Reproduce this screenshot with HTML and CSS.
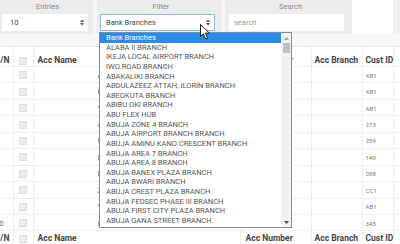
FILE: index.html
```html
<!DOCTYPE html>
<html lang="en">
<head>
    <meta charset="UTF-8">
    <title>Accounts</title>
    <link rel="stylesheet" href="styles.css">
</head>
<body>
<div class="page">
    <div class="toolbar">
        <div class="tool tool-entries">
            <div class="tool-label">Entries</div>
            <div class="select">
                <span>10</span>
                <svg class="arrows" width="4" height="7" viewBox="0 0 4 7"><path d="M0 3 L2 0.5 L4 3 Z M0 4 L2 6.5 L4 4 Z"/></svg>
            </div>
        </div>
        <div class="tool tool-filter">
            <div class="tool-label">Filter</div>
            <div class="select select-open">
                <span>Bank Branches</span>
                <svg class="arrows" width="4" height="7" viewBox="0 0 4 7"><path d="M0 3 L2 0.5 L4 3 Z M0 4 L2 6.5 L4 4 Z"/></svg>
            </div>
        </div>
        <div class="tool tool-search">
            <div class="tool-label">Search</div>
            <input class="search-input" type="text" placeholder="search">
        </div>
        <div class="tool-space"></div>
        <div class="tool-edge"></div>
    </div>
    <div class="strip"></div>

    <div class="table-wrap">
        <table class="accounts">
            <colgroup>
                <col class="col-sn"><col class="col-check"><col class="col-name">
                <col class="col-number"><col class="col-branch"><col class="col-cust"><col class="col-extra">
            </colgroup>
            <thead>
            <tr>
                <th>S/N</th><th><span class="check"></span></th><th>Acc Name</th>
                <th>Acc Number</th><th>Acc Branch</th><th>Cust ID</th><th></th>
            </tr>
            </thead>
            <tbody id="rows"></tbody>
            <tfoot>
            <tr>
                <th>S/N</th><th><span class="check"></span></th><th>Acc Name</th>
                <th>Acc Number</th><th>Acc Branch</th><th>Cust ID</th><th></th>
            </tr>
            </tfoot>
        </table>
    </div>

    <div class="dropdown">
        <ul class="options" id="options"></ul>
        <div class="scrollbar">
            <div class="scroll-btn"><svg width="5" height="3" viewBox="0 0 5 3"><path d="M0 3 L2.5 0 L5 3 Z"/></svg></div>
            <div class="scroll-track"><div class="scroll-thumb"></div></div>
            <div class="scroll-btn"><svg width="5" height="3" viewBox="0 0 5 3"><path d="M0 0 L2.5 3 L5 0 Z"/></svg></div>
        </div>
    </div>

    <svg class="cursor" width="11" height="16" viewBox="0 0 11 16">
        <path d="M0.5 0.5 L0.5 12.5 L3.3 9.8 L5.6 15 L7.6 14.1 L5.4 9.1 L9.3 9.1 Z" fill="#fff" stroke="#222" stroke-width="1"/>
    </svg>
</div>

<script>
    const rows = [
        { sn: 1, name: 'ADEYEMI TOLU', number: '0012345', cust: 'AB1' },
        { sn: 2, name: 'FOLAKE ADE', number: '0023456', cust: 'AB1' },
        { sn: 3, name: 'YUSUF BELLO', number: '0034567', cust: 'AB1' },
        { sn: 4, name: 'ABIOLA OKE', number: '0045678', cust: '273' },
        { sn: 5, name: 'IBRAHIM SANI', number: '20123456715', cust: '259' },
        { sn: 6, name: 'IFEOMA NWOSU', number: '0067890', cust: '140' },
        { sn: 7, name: 'LATEEF ADE', number: '0078901', cust: '098' },
        { sn: 8, name: 'ZAINAB MUSA', number: '0089012', cust: 'CC1' },
        { sn: 9, name: 'YEMISI OJO', number: '0090123', cust: 'AB1' },
        { sn: 10, name: 'IKENNA EZE', number: '0101234', cust: '345' }
    ];

    const branches = [
        'Bank Branches', 'ALABA II BRANCH', 'IKEJA LOCAL AIRPORT BRANCH', 'IWO ROAD BRANCH',
        'ABAKALIKI BRANCH', 'ABDULAZEEZ ATTAH, ILORIN BRANCH', 'ABEOKUTA BRANCH', 'ABIBU OKI BRANCH',
        'ABU FLEX HUB', 'ABUJA ZONE 4 BRANCH', 'ABUJA AIRPORT BRANCH BRANCH', 'ABUJA AMINU KANO CRESCENT BRANCH',
        'ABUJA AREA 7 BRANCH', 'ABUJA AREA 8 BRANCH', 'ABUJA BANEX PLAZA BRANCH', 'ABUJA BWARI BRANCH',
        'ABUJA CREST PLAZA BRANCH', 'ABUJA FEDSEC PHASE III BRANCH', 'ABUJA FIRST CITY PLAZA BRANCH',
        'ABUJA GANA STREET BRANCH'
    ];

    const tbody = document.getElementById('rows');
    rows.forEach(row => {
        const tr = document.createElement('tr');
        tr.innerHTML = `
            <td>${row.sn}</td>
            <td><span class="check"></span></td>
            <td class="cell-name">${row.name}</td>
            <td>${row.number}</td>
            <td></td>
            <td><span class="cust">${row.cust}0042</span></td>
            <td></td>
        `;
        tbody.appendChild(tr);
    });

    const list = document.getElementById('options');
    branches.forEach((branch, i) => {
        const li = document.createElement('li');
        li.textContent = branch;
        if (i === 0) li.className = 'active';
        list.appendChild(li);
    });
</script>
</body>
</html>
```

FILE: styles.css
```css
body {
    margin: 0;
    font-family: Roboto, "Liberation Sans", sans-serif;
    background-color: #ffffff;
}

.page {
    position: relative;
    width: 400px;
    height: 244px;
    overflow: hidden;
}

/* barre d'outils */
.toolbar {
    display: flex;
    height: 34px;
    background-color: #f6f6f6;
}

.tool {
    display: flex;
    flex-direction: column;
    box-sizing: border-box;
    background-color: #ececec;
}

.tool-entries {
    width: 93px;
    padding-left: 2px;
    margin-right: 4px;
}

.tool-filter {
    width: 125px;
    padding-left: 3px;
    margin-right: 3px;
}

.tool-search {
    width: 127px;
    padding-left: 4px;
}

.tool-space {
    flex: 1;
    background-color: #ffffff;
}

.tool-edge {
    width: 7px;
    background-color: #efefef;
}

.tool-label {
    height: 14px;
    line-height: 14px;
    font-size: 7.5px;
    color: #8a8a8a;
    text-align: center;
}

.select {
    display: flex;
    align-items: center;
    justify-content: space-between;
    box-sizing: border-box;
    width: 86px;
    height: 17px;
    padding: 0 4px 0 8px;
    background-color: #ffffff;
    font-size: 7.5px;
    color: #444;
}

.select-open {
    width: 115px;
    padding: 0 4px 0 5px;
    border: 1px solid #8cb9e8;
}

.arrows {
    fill: #555;
}

.search-input {
    box-sizing: border-box;
    width: 115px;
    height: 17px;
    margin: 0;
    padding: 0 5px;
    border: none;
    outline: none;
    background-color: #ffffff;
    font-family: inherit;
    font-size: 7.5px;
    color: #444;
}

.search-input::placeholder {
    color: #9a9a9a;
}

.strip {
    height: 12px;
    background-color: #f7f7f7;
    border-bottom: 1px solid #e8e8e8;
}

/* tableau */
.table-wrap {
    overflow: hidden;
}

.accounts {
    margin-left: -14px;
    width: 437px;
    table-layout: fixed;
    border-collapse: collapse;
    font-size: 7.5px;
    color: #666;
}

.col-sn { width: 27px; }
.col-check { width: 20px; }
.col-name { width: 207px; }
.col-number { width: 71px; }
.col-branch { width: 51px; }
.col-cust { width: 31px; }
.col-extra { width: 30px; }

.accounts th,
.accounts td {
    border: 1px solid #ededed;
    padding: 0 0 0 3px;
    text-align: left;
    white-space: nowrap;
    overflow: hidden;
    line-height: 9px;
}

.accounts th:first-child,
.accounts td:first-child {
    padding-left: 9px;
    border-left: none;
}

.accounts thead th {
    height: 18px;
    vertical-align: bottom;
    padding-bottom: 1px;
    border-top: none;
    font-size: 8.5px;
    font-weight: bold;
    color: #444;
}

.accounts thead th:nth-child(3),
.accounts tfoot th:nth-child(3) {
    padding-left: 4px;
}

.accounts thead th:nth-child(4),
.accounts tfoot th:nth-child(4),
.accounts td:nth-child(4) {
    padding-left: 5px;
}

.accounts tbody tr {
    height: 16.44px;
}

.accounts tbody td {
    padding-top: 1px;
}

.accounts tfoot th {
    height: 15px;
    font-size: 8.5px;
    font-weight: bold;
    color: #444;
}

.cell-name {
    padding-left: 64px !important;
}

.check {
    display: block;
    width: 6px;
    height: 6px;
    margin-left: 2px;
    background-color: #ececec;
    border: 1px solid #dedede;
}

.cust {
    display: block;
    width: 10px;
    overflow: hidden;
    font-size: 6px;
    color: #777;
}

/* liste déroulante ouverte */
.dropdown {
    position: absolute;
    left: 99px;
    top: 32px;
    display: flex;
    box-sizing: border-box;
    width: 193px;
    height: 196px;
    background-color: #ffffff;
    border: 1px solid #7d8da2;
}

.options {
    flex: 1;
    margin: 0;
    padding: 0;
    list-style: none;
}

.options li {
    height: 9.63px;
    line-height: 9.63px;
    padding-left: 6px;
    font-size: 7.5px;
    color: #555;
    white-space: nowrap;
}

.options li.active {
    background-color: #2a8be9;
    color: #ffffff;
}

.scrollbar {
    display: flex;
    flex-direction: column;
    width: 10px;
    background-color: #f1f1f1;
}

.scroll-btn {
    display: flex;
    align-items: center;
    justify-content: center;
    height: 10px;
    fill: #a3a3a3;
}

.scroll-btn:last-child {
    fill: #505050;
}

.scroll-track {
    flex: 1;
}

.scroll-thumb {
    width: 7px;
    height: 10px;
    margin: 0 auto;
    background-color: #c1c1c1;
}

.cursor {
    position: absolute;
    left: 200px;
    top: 24px;
}
```
